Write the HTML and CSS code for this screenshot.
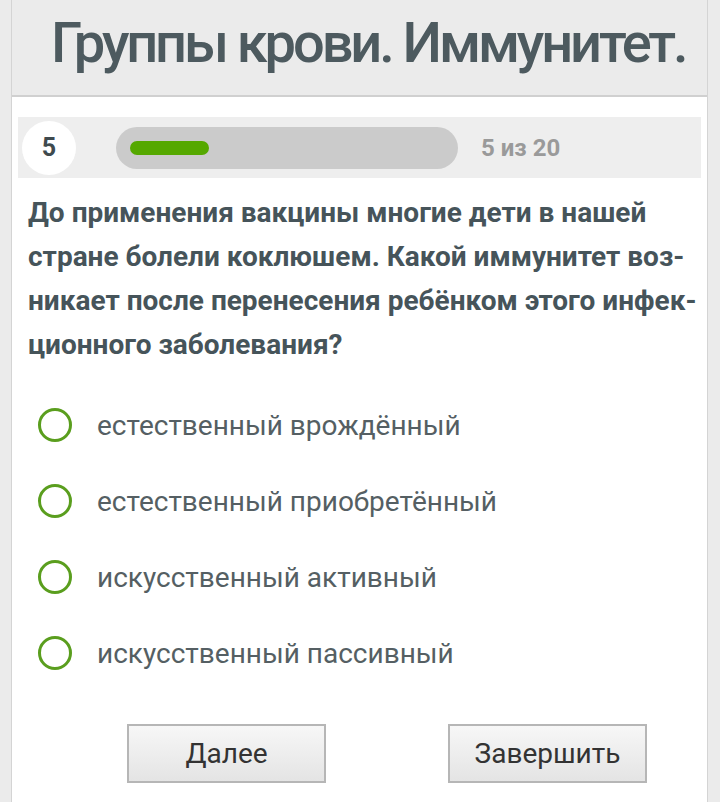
FILE: index.html
```html
<!DOCTYPE html>
<html lang="ru">
<head>
    <meta charset="UTF-8">
    <meta name="viewport" content="width=device-width, initial-scale=1.0">
    <title>Группы крови. Иммунитет.</title>
    <link rel="stylesheet" href="styles.css">
</head>
<body>
    <div class="page">
        <div class="header">
            <h1>Группы крови. Иммунитет.</h1>
        </div>

        <!-- Прогресс теста -->
        <div class="progress">
            <div class="number">5</div>
            <div class="track"><div class="fill" style="width: 79px"></div></div>
            <div class="count">5 из 20</div>
        </div>

        <p class="question">До применения вакцины многие дети в нашей стране болели коклюшем. Какой иммунитет воз&shy;никает после перенесения ребёнком этого инфек&shy;ционного заболевания?</p>

        <!-- Варианты ответа -->
        <div class="answers">
            <label class="answer"><span class="radio"></span>естественный врождённый</label>
            <label class="answer"><span class="radio"></span>естественный приобретённый</label>
            <label class="answer"><span class="radio"></span>искусственный активный</label>
            <label class="answer"><span class="radio"></span>искусственный пассивный</label>
        </div>

        <div class="buttons">
            <button>Далее</button>
            <button>Завершить</button>
        </div>
    </div>
</body>
</html>
```

FILE: styles.css
```css
body {
    margin: 0;
    padding: 0;
    background-color: #ebebeb;
    font-family: Roboto, "Liberation Sans", sans-serif;
}
.page {
    margin: 0 12px 0 11px;
    min-height: 802px;
    background: white;
    border-left: 1px solid #d4d4d4;
    border-right: 1px solid #d4d4d4;
    box-sizing: border-box;
}
.header {
    height: 97px;
    background-color: #ebebeb;
    border-bottom: 2px solid #d0d0d0;
    box-sizing: border-box;
    padding-left: 39px;
}
h1 {
    margin: 0;
    font-size: 56px;
    font-weight: 500;
    line-height: 86px;
    color: #4d5a5f;
    letter-spacing: -3.1px;
    white-space: nowrap;
}
.progress {
    display: flex;
    align-items: center;
    height: 61px;
    margin: 20px 6px 0;
    padding-left: 4px;
    background-color: #eeeeee;
}
.number {
    width: 54px;
    height: 54px;
    border-radius: 50%;
    background: white;
    display: flex;
    align-items: center;
    justify-content: center;
    font-size: 25px;
    font-weight: 700;
    color: #3f4a4e;
}
.track {
    width: 342px;
    height: 42px;
    margin-left: 40px;
    border-radius: 21px;
    background-color: #cbcbcb;
    display: flex;
    align-items: center;
    padding-left: 14px;
    box-sizing: border-box;
}
.fill {
    height: 14px;
    border-radius: 7px;
    background-color: #55a800;
}
.count {
    margin-left: 23px;
    font-size: 24px;
    font-weight: 700;
    color: #9a9a9a;
}
.question {
    margin: 13px 4px 0 16px;
    font-size: 28px;
    font-weight: 700;
    line-height: 44px;
    color: #46545a;
}
.answers {
    margin-top: 20px;
}
.answer {
    display: flex;
    align-items: center;
    height: 76px;
    padding-left: 26px;
    font-size: 28px;
    color: #555f63;
}
.radio {
    width: 28px;
    height: 28px;
    border: 3.5px solid #5a9e1e;
    border-radius: 50%;
    margin-right: 25px;
}
.buttons {
    display: flex;
    gap: 122px;
    margin-top: 33px;
    padding-left: 115px;
}
button {
    width: 199px;
    height: 59px;
    border: 2px solid #b6b6b6;
    background: linear-gradient(#f7f7f7, #e4e4e4);
    font-family: Roboto, "Liberation Sans", sans-serif;
    font-size: 28px;
    color: #333;
}
```
